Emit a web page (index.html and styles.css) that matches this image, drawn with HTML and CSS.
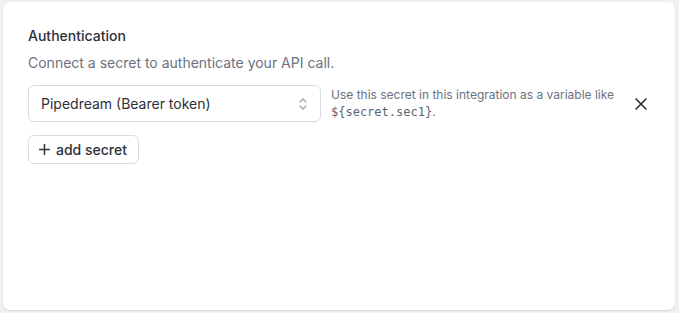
FILE: index.html
```html
<!DOCTYPE html>
<html lang="en">
<head>
  <meta charset="UTF-8">
  <title>Authentication</title>
  <link rel="stylesheet" href="styles.css">
</head>
<body>
  <div class="card">
    <div class="section-title">Authentication</div>
    <p class="section-desc">Connect a secret to authenticate your API call.</p>

    <div class="secret-row">
      <div class="select">
        <span>Pipedream (Bearer token)</span>
        <svg class="chevrons" width="10" height="14" viewBox="0 0 10 14" fill="none" stroke="#9ca3af" stroke-width="1.3" stroke-linecap="round" stroke-linejoin="round">
          <path d="M2 5 L5 2 L8 5"/>
          <path d="M2 9 L5 12 L8 9"/>
        </svg>
      </div>
      <div class="hint">Use this secret in this integration as a variable like <code>${secret.sec1}</code>.</div>
      <button class="remove" aria-label="Remove">
        <svg width="12" height="12" viewBox="0 0 12 12" stroke="#1f2937" stroke-width="1.5" stroke-linecap="round">
          <path d="M1 1 L11 11 M11 1 L1 11"/>
        </svg>
      </button>
    </div>

    <button class="add-btn">
      <svg width="11" height="11" viewBox="0 0 11 11" stroke="#2d3139" stroke-width="1.5" stroke-linecap="round">
        <path d="M5.5 0.5 V10.5 M0.5 5.5 H10.5"/>
      </svg>
      add secret
    </button>
  </div>
</body>
</html>
```

FILE: styles.css
```css
*, *::before, *::after { box-sizing:border-box; margin:0; padding:0; }
html, body { width:100%; height:100%; overflow:hidden; font-family:'Inter',sans-serif; background:#f0f1f3; }
body { padding:2px 4px 3px 3px; }
.card {
  height:100%; background:#fff; border-radius:7px;
  box-shadow:0 1px 2px rgba(0,0,0,0.12);
  padding:24px 25px;
}
.section-title { font-size:14px; font-weight:500; color:#2d3139; line-height:20px; }
.section-desc { font-size:14px; color:#6b7280; line-height:20px; margin-top:7px; }
.secret-row { display:flex; align-items:center; margin-top:12px; }
.select {
  width:293px; height:37px; flex:none;
  border:1px solid #d8dbe0; border-radius:6px;
  display:flex; align-items:center; justify-content:space-between;
  padding:0 12px 0 12px;
  font-size:14px; color:#2d3139;
}
.hint {
  margin-left:10px; width:295px;
  font-size:12px; line-height:17px; color:#6b7280;
}
.hint code { font-family:'DejaVu Sans Mono',monospace; font-size:12px; color:#5f6470; }
.remove {
  margin-left:auto; margin-right:-3px; background:none; border:0;
  width:24px; height:24px; display:flex; align-items:center; justify-content:center; cursor:pointer;
}
.add-btn {
  margin-top:13px; height:29px; padding:0 11px 0 10px;
  display:inline-flex; align-items:center; gap:6px;
  border:1px solid #d8dbe0; border-radius:6px; background:#fff;
  font-family:'Inter',sans-serif; font-size:14px; font-weight:500; color:#2d3139;
  cursor:pointer;
}
```
